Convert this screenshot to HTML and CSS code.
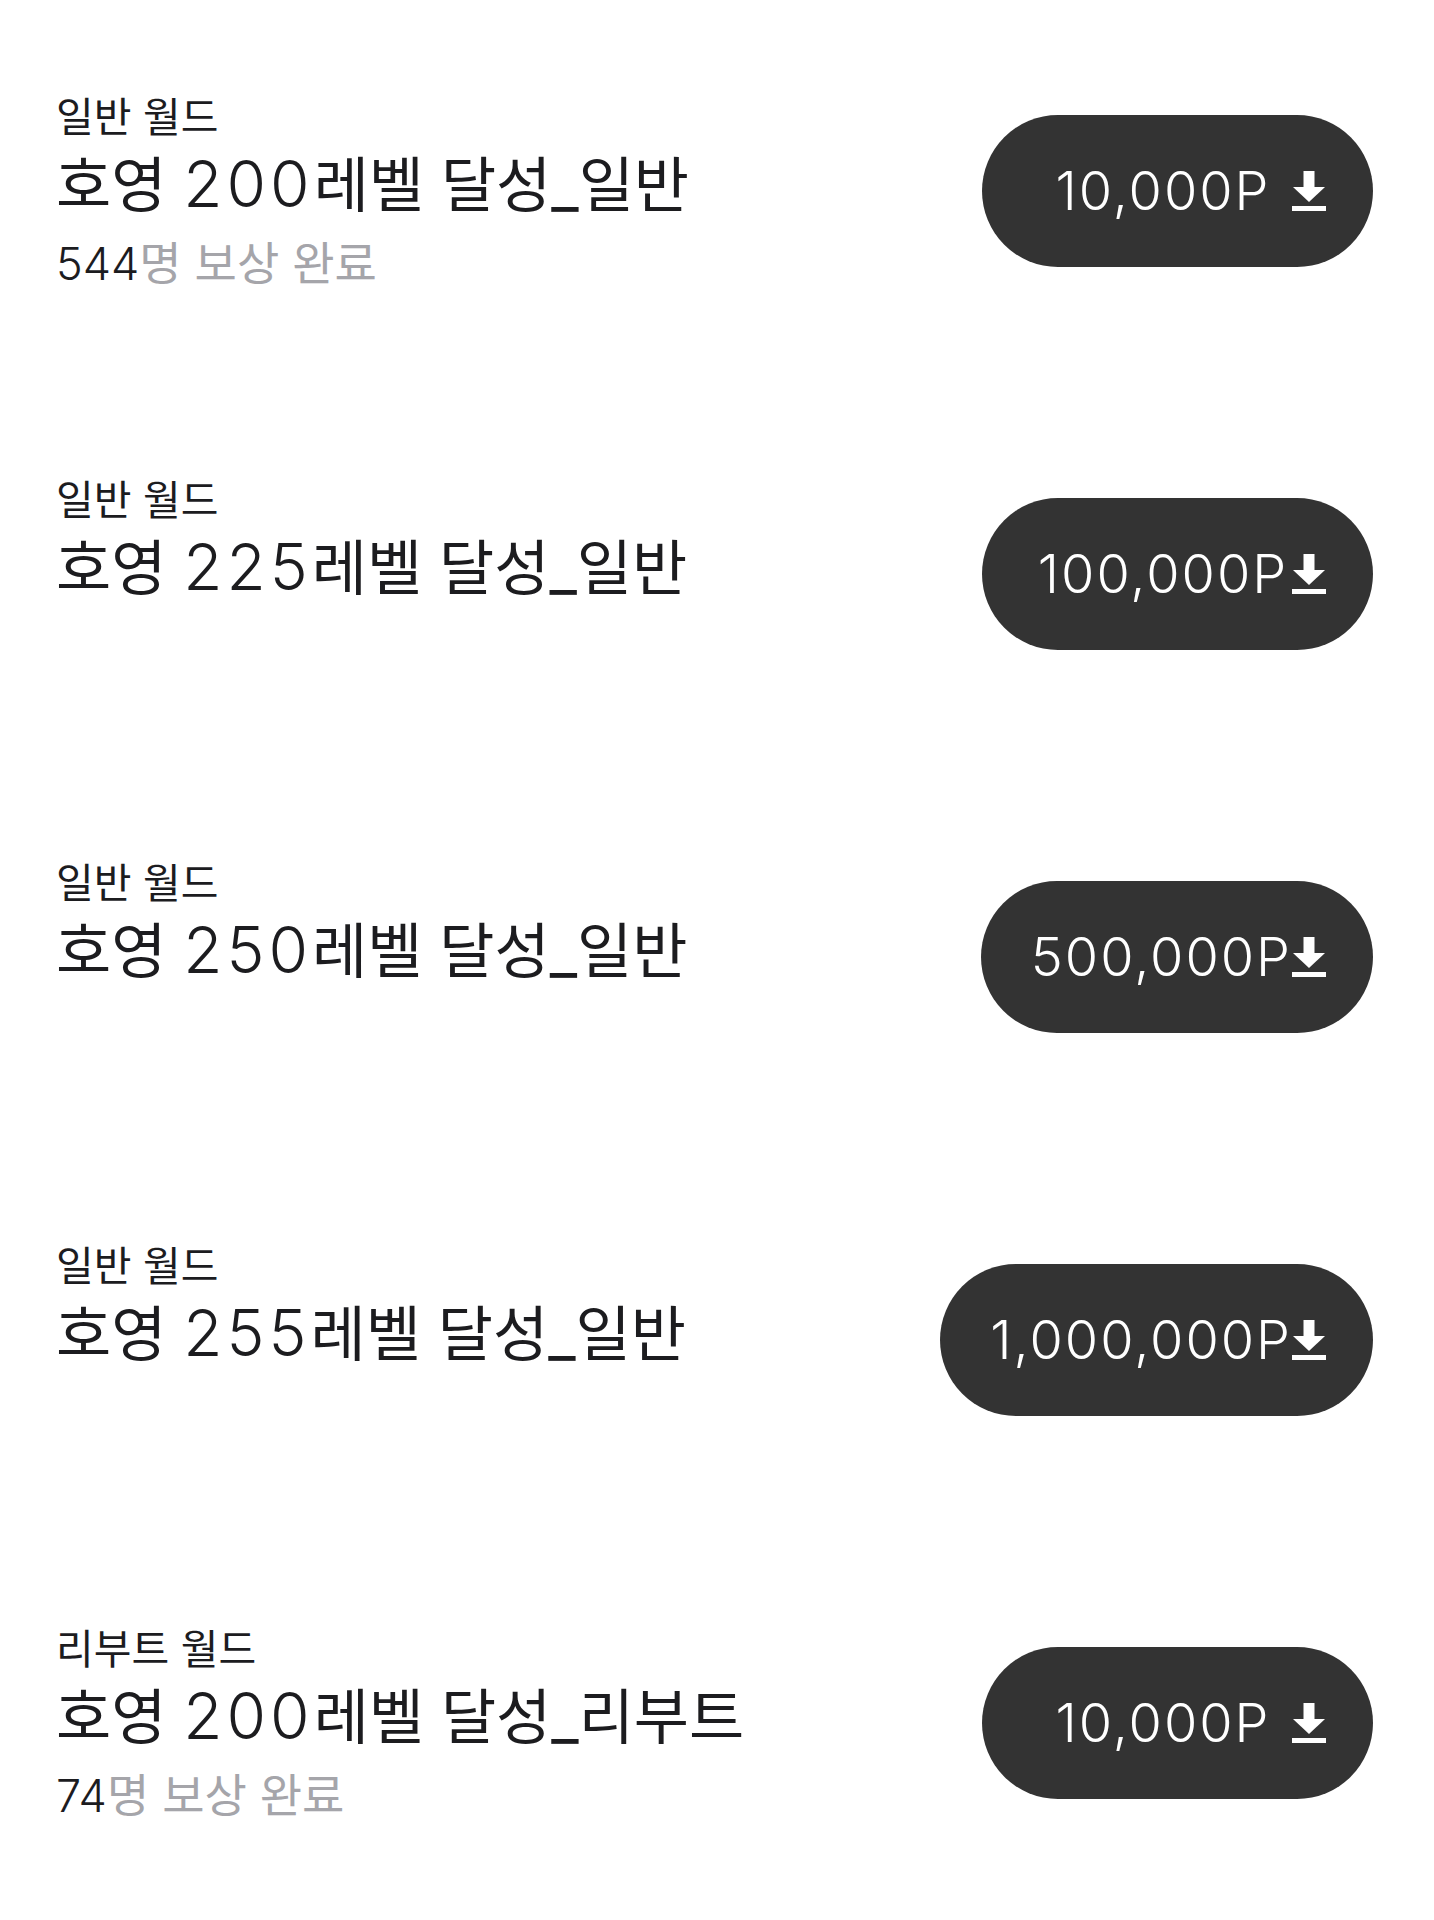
FILE: index.html
```html
<!DOCTYPE html>
<html lang="ko">
<head>
    <meta charset="UTF-8">
    <title>보상 목록</title>
    <link rel="stylesheet" href="styles.css">
</head>
<body>

<div class="reward-list">
    <div class="reward-item">
        <div class="reward-info">
            <p class="world">일반 월드</p>
            <h3 class="reward-title">호영 <span class="num">200</span>레벨 달성_일반</h3>
            <p class="reward-count"><span class="count-num">544</span>명 보상 완료</p>
        </div>
        <button class="claim-button">
            <span class="points">10,000P</span>
            <svg class="down-icon" viewBox="0 0 34 40"><rect x="11.5" y="0" width="11" height="17"/><polygon points="1,16 33,16 17,31"/><rect x="0" y="35" width="34" height="5"/></svg>
        </button>
    </div>

    <div class="reward-item">
        <div class="reward-info">
            <p class="world">일반 월드</p>
            <h3 class="reward-title">호영 <span class="num">225</span>레벨 달성_일반</h3>
        </div>
        <button class="claim-button">
            <span class="points">100,000P</span>
            <svg class="down-icon" viewBox="0 0 34 40"><rect x="11.5" y="0" width="11" height="17"/><polygon points="1,16 33,16 17,31"/><rect x="0" y="35" width="34" height="5"/></svg>
        </button>
    </div>

    <div class="reward-item">
        <div class="reward-info">
            <p class="world">일반 월드</p>
            <h3 class="reward-title">호영 <span class="num">250</span>레벨 달성_일반</h3>
        </div>
        <button class="claim-button">
            <span class="points">500,000P</span>
            <svg class="down-icon" viewBox="0 0 34 40"><rect x="11.5" y="0" width="11" height="17"/><polygon points="1,16 33,16 17,31"/><rect x="0" y="35" width="34" height="5"/></svg>
        </button>
    </div>

    <div class="reward-item">
        <div class="reward-info">
            <p class="world">일반 월드</p>
            <h3 class="reward-title">호영 <span class="num">255</span>레벨 달성_일반</h3>
        </div>
        <button class="claim-button">
            <span class="points">1,000,000P</span>
            <svg class="down-icon" viewBox="0 0 34 40"><rect x="11.5" y="0" width="11" height="17"/><polygon points="1,16 33,16 17,31"/><rect x="0" y="35" width="34" height="5"/></svg>
        </button>
    </div>

    <div class="reward-item">
        <div class="reward-info">
            <p class="world">리부트 월드</p>
            <h3 class="reward-title">호영 <span class="num">200</span>레벨 달성_리부트</h3>
            <p class="reward-count"><span class="count-num">74</span>명 보상 완료</p>
        </div>
        <button class="claim-button">
            <span class="points">10,000P</span>
            <svg class="down-icon" viewBox="0 0 34 40"><rect x="11.5" y="0" width="11" height="17"/><polygon points="1,16 33,16 17,31"/><rect x="0" y="35" width="34" height="5"/></svg>
        </button>
    </div>
</div>

</body>
</html>
```

FILE: styles.css
```css
body {
    margin: 0;
    padding: 0;
    background-color: #ffffff;
    font-family: Inter, "Noto Sans CJK KR", sans-serif;
    color: #1c1c1f;
}

.reward-list {
    display: flex;
    flex-direction: column;
}

.reward-item {
    display: flex;
    justify-content: space-between;
    align-items: flex-start;
    height: 383px;
    padding: 0 61px 0 56px;
}

.reward-info {
    padding-top: 93px;
}

.world {
    margin: 0;
    font-size: 41px;
    line-height: 48px;
    font-weight: 400;
}

.reward-title {
    margin: 12px 0 0;
    font-size: 60px;
    line-height: 64px;
    font-weight: 400;
}

.reward-title .num {
    font-size: 64px;
    line-height: 0;
    font-weight: 300;
    letter-spacing: 4px;
}

.reward-count {
    margin: 19px 0 0;
    font-size: 46px;
    line-height: 54px;
    color: #a5a5aa;
}

.count-num {
    font-size: 45px;
    line-height: 0;
    font-weight: 300;
    color: #1c1c1f;
}

.claim-button {
    display: flex;
    align-items: center;
    justify-content: flex-end;
    box-sizing: border-box;
    min-width: 391px;
    height: 152px;
    margin-top: 115px;
    padding: 0 47px 0 50px;
    border: none;
    border-radius: 76px;
    background-color: #333333;
    color: #ffffff;
    font-family: Inter, sans-serif;
    cursor: pointer;
}

.points {
    display: inline-block;
    min-width: 258px;
    text-align: center;
    font-size: 54px;
    font-weight: 300;
    letter-spacing: 2px;
    line-height: 1;
}

.down-icon {
    width: 34px;
    height: 40px;
    fill: #ffffff;
    flex-shrink: 0;
}
```
